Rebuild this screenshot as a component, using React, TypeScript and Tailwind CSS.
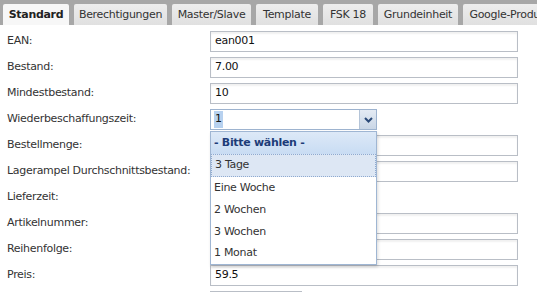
import React from "react";

const tabs = [
  { label: "Standard", w: 66, active: true },
  { label: "Berechtigungen", w: 93 },
  { label: "Master/Slave", w: 79 },
  { label: "Template", w: 62 },
  { label: "FSK 18", w: 50 },
  { label: "Grundeinheit", w: 80 },
  { label: "Google-Produkte", w: 100 },
];

function TextInput({ value, w = 308 }: { value?: string; w?: number }) {
  return (
    <div
      className="h-[21px] shrink-0 border border-[#b9bec6] bg-white shadow-[inset_0_2px_2px_rgba(0,0,0,0.06)] flex items-center pl-[4px] text-[#111]"
      style={{ width: w }}
    >
      {value}
    </div>
  );
}

const rows: { label: string; kind: "input" | "select" | "none"; value?: string }[] = [
  { label: "EAN:", kind: "input", value: "ean001" },
  { label: "Bestand:", kind: "input", value: "7.00" },
  { label: "Mindestbestand:", kind: "input", value: "10" },
  { label: "Wiederbeschaffungszeit:", kind: "select" },
  { label: "Bestellmenge:", kind: "input" },
  { label: "Lagerampel Durchschnittsbestand:", kind: "input" },
  { label: "Lieferzeit:", kind: "none" },
  { label: "Artikelnummer:", kind: "input" },
  { label: "Reihenfolge:", kind: "input" },
  { label: "Preis:", kind: "input", value: "59.5" },
];

export default function App() {
  return (
    <div className="w-[537px] h-[292px] overflow-hidden bg-white relative font-['DejaVu_Sans','Verdana',sans-serif] text-[11px] tracking-[-0.3px] text-[#333]">
      <div className="h-[25px] bg-[#a7a7a7] flex items-end gap-[5px] pl-[3px] overflow-hidden">
        {tabs.map((t) => (
          <div
            key={t.label}
            className={
              "h-[21px] shrink-0 flex items-center justify-center rounded-t-[2px] pt-[1px] " +
              (t.active
                ? "bg-[#f7f7f7] font-bold text-[#222]"
                : "bg-gradient-to-b from-[#ededed] to-[#e0e0e0] text-[#333]")
            }
            style={{ width: t.w }}
          >
            <span className="whitespace-nowrap">{t.label}</span>
          </div>
        ))}
      </div>

      <div className="pt-[6px] flex flex-col gap-[5px]">
        {rows.map((r) => (
          <div key={r.label} className="h-[21px] flex items-center">
            <div className="w-[210px] pl-[7px] shrink-0 whitespace-nowrap">{r.label}</div>
            {r.kind === "input" && <TextInput value={r.value} />}
            {r.kind === "select" && (
              <div className="w-[167px] h-[21px] border border-[#9db3cf] flex bg-white">
                <div className="flex-1 flex items-center pl-[3px]">
                  <span className="bg-[#b7d1ef] text-[#111] px-[1px]">1</span>
                </div>
                <div className="w-[17px] border-l border-[#b4c4d8] bg-gradient-to-b from-[#e4ebf4] to-[#c9d6e6] flex items-center justify-center">
                  <svg width="9" height="6" viewBox="0 0 9 6">
                    <path d="M1 1 L4.5 4.5 L8 1" fill="none" stroke="#2b4a78" strokeWidth="2" />
                  </svg>
                </div>
              </div>
            )}
          </div>
        ))}
        <div className="h-[21px] flex items-center">
          <div className="w-[210px] shrink-0" />
          <TextInput w={92} />
        </div>
      </div>

      <div className="absolute left-[210px] top-[131px] w-[167px] border border-[#9fb6d3] bg-white shadow-[1px_2px_3px_rgba(0,0,0,0.15)] text-[#333]">
        <div className="h-[22px] flex items-center pl-[3px] font-bold text-[#1d3c78] bg-gradient-to-b from-[#dde9f7] to-[#c8dcf3]">
          - Bitte wählen -
        </div>
        <div className="h-[23px] flex items-center pl-[3px] bg-[#dde7f4] border border-dotted border-[#8faad0]">
          3 Tage
        </div>
        <div className="h-[22px] flex items-center pl-[3px]">Eine Woche</div>
        <div className="h-[22px] flex items-center pl-[3px]">2 Wochen</div>
        <div className="h-[22px] flex items-center pl-[3px]">3 Wochen</div>
        <div className="h-[21px] flex items-center pl-[3px]">1 Monat</div>
      </div>
    </div>
  );
}
